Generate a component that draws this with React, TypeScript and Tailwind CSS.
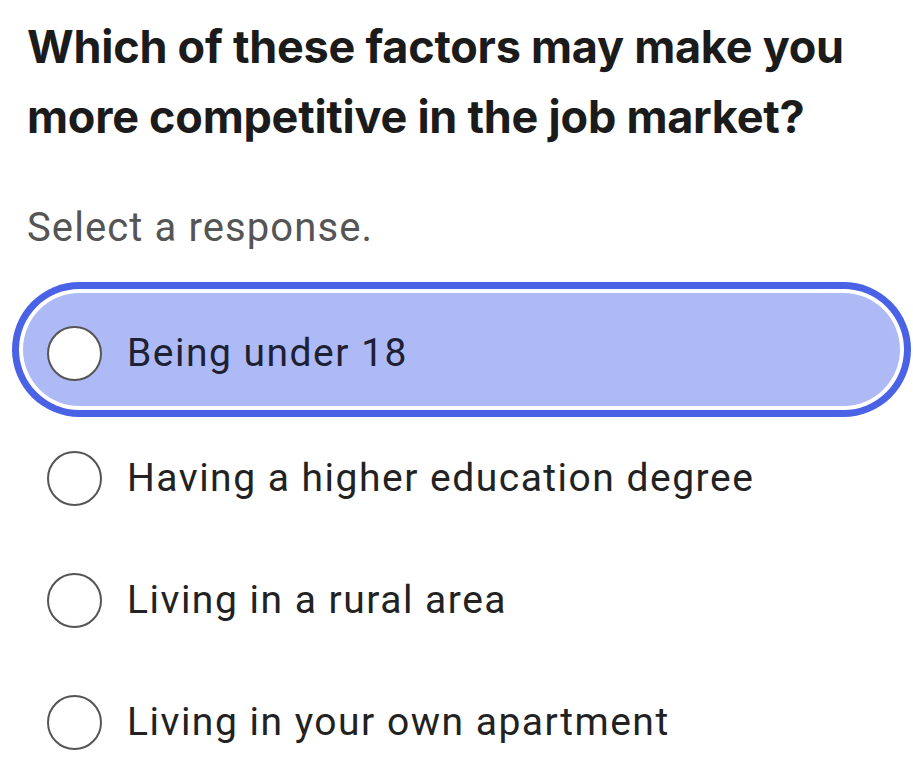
const options = [
  'Being under 18',
  'Having a higher education degree',
  'Living in a rural area',
  'Living in your own apartment',
];

function Radio() {
  return <span className="block w-[55px] h-[55px] shrink-0 rounded-full border-[2.5px] border-[#555] bg-white" />;
}

export default function App() {
  const selected = 0;
  return (
    <div className="w-[913px] h-[767px] bg-white overflow-hidden font-['Roboto','Liberation_Sans',sans-serif]">
      <h1 className="pl-[27px] pt-[12px] text-[45px] leading-[70px] font-bold text-[#1b1b1b] tracking-[-0.25px] font-['Inter','Liberation_Sans',sans-serif]">
        Which of these factors may make you more competitive in the job market?
      </h1>
      <p className="pl-[27px] mt-[52px] text-[40px] leading-[48px] text-[#555] tracking-[1.1px]">Select a response.</p>

      <div className="mt-[30px] pl-[12px] flex flex-col">
        {options.map((label, i) =>
          i === selected ? (
            <div key={label} className="w-[899px] h-[135px] rounded-full bg-[#4a62e6] p-[7px]">
              <div className="h-full rounded-full bg-white p-[4px]">
                <div className="h-full rounded-full bg-[#adbaf6] flex items-center gap-[25px] pl-[24px] pt-[8px]">
                  <Radio />
                  <span className="text-[39px] text-[#1d2133] tracking-[1.5px]">{label}</span>
                </div>
              </div>
            </div>
          ) : (
            <div key={label} className="h-[122px] flex items-center gap-[25px] pl-[35px]">
              <Radio />
              <span className="text-[39px] text-[#222] tracking-[1.5px]">{label}</span>
            </div>
          )
        )}
      </div>
    </div>
  );
}
